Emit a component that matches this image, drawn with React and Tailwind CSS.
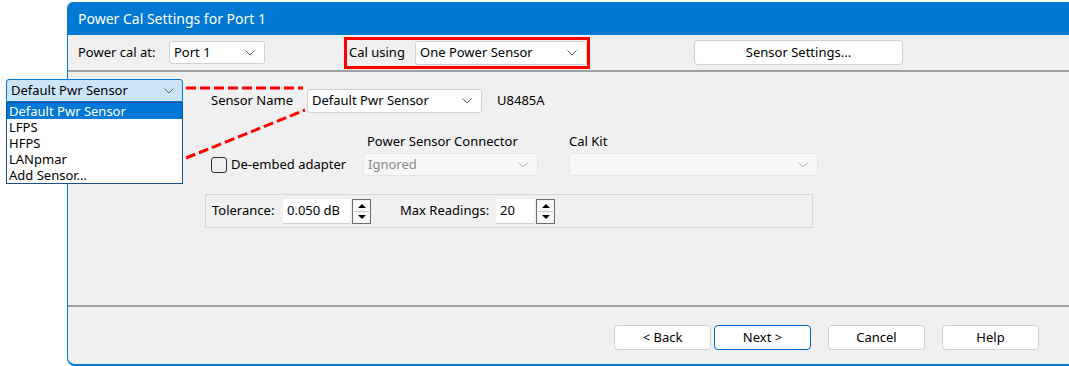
import React from "react";

const FONT = { fontFamily: '"Noto Sans", "Open Sans", sans-serif' };

function Chevron({ color = "#606060" }) {
  return (
    <svg width="10" height="6" viewBox="0 0 10 6" className="shrink-0">
      <path d="M0.5 0.5 L5 5 L9.5 0.5" fill="none" stroke={color} strokeWidth="1" />
    </svg>
  );
}

function Combo({ text, className = "", disabled = false }) {
  return (
    <div
      className={`flex items-center justify-between rounded-[3px] border pl-[4px] pr-[9px] ${
        disabled ? "bg-[#f7f7f7] border-[#e6e6e6] text-[#8a8a8a]" : "bg-white border-[#d0d0d0] text-black"
      } ${className}`}
    >
      <span className="truncate">{text}</span>
      <Chevron color={disabled ? "#b8b8b8" : "#606060"} />
    </div>
  );
}

function Spinner() {
  return (
    <div className="flex h-[25px] w-[19px] flex-col border border-[#6e6e6e] bg-[#f4f4f4] p-px ml-[2px]">
      <div className="flex flex-1 items-center justify-center border-b border-[#c8c8c8] bg-[#f8f8f8]">
        <div className="h-0 w-0 border-x-[4px] border-b-[4px] border-x-transparent border-b-black" />
      </div>
      <div className="flex flex-1 items-center justify-center bg-[#f8f8f8]">
        <div className="h-0 w-0 border-x-[4px] border-t-[4px] border-x-transparent border-t-black" />
      </div>
    </div>
  );
}

function Button({ children, primary = false }) {
  return (
    <button
      className={`h-[25px] w-[97px] rounded-[4px] border bg-white text-[13px] text-black ${
        primary ? "border-[#0067c0]" : "border-[#d0d0d0]"
      }`}
    >
      {children}
    </button>
  );
}

export default function App() {
  return (
    <div className="relative h-[366px] w-[1069px] overflow-hidden bg-white text-[13px]" style={FONT}>
      {/* Dialog window */}
      <div className="ml-[67px] mt-[2px] flex h-[364px] w-[1010px] flex-col overflow-hidden rounded-tl-[6px] rounded-bl-[8px] border-b-2 border-l border-[#0078d4] bg-[#f0f0f0]">
        <div className="flex h-[33px] shrink-0 items-center bg-[#0078d4] pl-[10px] text-[14px] text-white">
          Power Cal Settings for Port 1
        </div>

        {/* Top row */}
        <div className="flex h-[37px] shrink-0 items-center border-b-2 border-[#a0a0a0] pl-[10px]">
          <span className="w-[91px]">Power cal at:</span>
          <Combo text="Port 1" className="h-[23px] w-[96px]" />
          <div className="ml-[79px] flex h-[32px] w-[246px] items-center border-[3px] border-[#ff0000] pl-[2px]">
            <span className="w-[66px]">Cal using</span>
            <Combo text="One Power Sensor" className="h-[24px] w-[172px]" />
          </div>
          <button className="ml-[104px] h-[25px] w-[209px] rounded-[4px] border border-[#d0d0d0] bg-white text-[13px]">
            Sensor Settings...
          </button>
        </div>

        {/* Main content */}
        <div className="flex h-[235px] shrink-0 flex-col border-b-2 border-[#a0a0a0] pl-[143px]">
          <div className="mt-[17px] flex h-[24px] items-center">
            <span className="w-[96px]">Sensor Name</span>
            <Combo text="Default Pwr Sensor" className="h-[24px] w-[175px]" />
            <span className="ml-[15px]">U8485A</span>
          </div>

          <div className="mt-[20px] flex items-end">
            <div className="flex h-[23px] w-[152px] items-center">
              <div className="h-[16px] w-[16px] rounded-[3px] border border-[#333]" />
              <span className="ml-[4px]">De-embed adapter</span>
            </div>
            <div className="flex flex-col">
              <span className="mb-[4px] ml-[4px] leading-[16px]">Power Sensor Connector</span>
              <Combo text="Ignored" disabled className="h-[23px] w-[175px]" />
            </div>
            <div className="ml-[31px] flex flex-col">
              <span className="mb-[4px] leading-[16px]">Cal Kit</span>
              <Combo text="" disabled className="h-[23px] w-[249px]" />
            </div>
          </div>

          <div className="-ml-[6px] mt-[18px] flex h-[34px] w-[608px] items-center border border-[#d8d8d8] pl-[6px]">
            <span className="w-[71px]">Tolerance:</span>
            <div className="flex h-[25px] w-[67px] items-center border-b border-[#d0d0d0] bg-white pl-[4px]">0.050 dB</div>
            <Spinner />
            <span className="ml-[29px] w-[96px]">Max Readings:</span>
            <div className="flex h-[25px] w-[38px] items-center border-b border-[#d0d0d0] bg-white pl-[4px]">20</div>
            <Spinner />
          </div>
        </div>

        {/* Footer buttons */}
        <div className="flex flex-1 items-start pl-[546px] pt-[18px]">
          <Button>&lt; Back</Button>
          <div className="ml-[3px]">
            <Button primary>Next &gt;</Button>
          </div>
          <div className="ml-[17px]">
            <Button>Cancel</Button>
          </div>
          <div className="ml-[17px]">
            <Button>Help</Button>
          </div>
        </div>
      </div>

      {/* Opened dropdown overlay */}
      <div className="absolute left-[6px] top-[79px] w-[177px]">
        <div className="flex h-[23px] items-center justify-between rounded-t-[3px] border border-[#0078d4] bg-[#cce4f7] pl-[4px] pr-[8px]">
          <span>Default Pwr Sensor</span>
          <Chevron />
        </div>
        <div className="flex flex-col border border-[#1a4f8a] bg-white leading-[16px]">
          <div className="bg-[#0078d7] pl-[2px] text-white">Default Pwr Sensor</div>
          <div className="pl-[2px]">LFPS</div>
          <div className="pl-[2px]">HFPS</div>
          <div className="pl-[2px]">LANpmar</div>
          <div className="pl-[2px]">Add Sensor...</div>
        </div>
      </div>

      {/* Annotation dashes */}
      <svg className="pointer-events-none absolute left-0 top-0" width="1069" height="366">
        <line x1="186" y1="88" x2="303" y2="88" stroke="#ff0000" strokeWidth="3" strokeDasharray="10 4" />
        <line x1="186" y1="158" x2="305" y2="110" stroke="#ff0000" strokeWidth="3" strokeDasharray="10 4" />
      </svg>
    </div>
  );
}
